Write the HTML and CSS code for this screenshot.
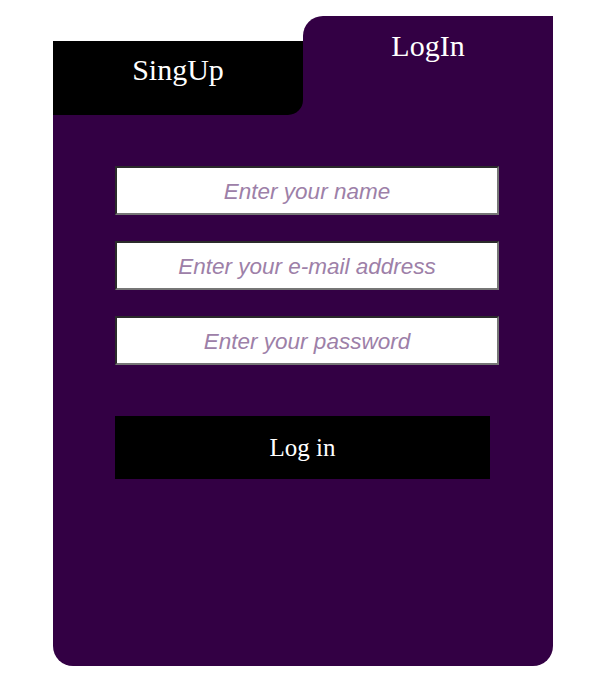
FILE: index.html
```html
<!DOCTYPE html>
<html>
<head>
<meta charset="utf-8">
<link rel="stylesheet" href="styles.css">
</head>
<body>
<div class="card">
  <div class="tabs">
    <div class="tab-left-wrap">
      <div class="tab tab-signup">SingUp</div>
    </div>
    <div class="tab tab-login">LogIn</div>
  </div>
  <form class="panel">
    <input class="field" type="text" placeholder="Enter your name">
    <input class="field" type="email" placeholder="Enter your e-mail address">
    <input class="field" type="password" placeholder="Enter your password">
    <button class="submit" type="button">Log in</button>
  </form>
</div>
</body>
</html>
```

FILE: styles.css
```css
html, body {
  margin: 0;
  padding: 0;
  background: #ffffff;
}
body {
  padding: 16px 0 0 53px;
  font-family: "Liberation Serif", "Times New Roman", serif;
}
.card {
  width: 500px;
}
.tabs {
  display: grid;
  grid-template-columns: 250px 250px;
}
.tab-left-wrap {
  margin-top: 25px;
  background: #330044;
}
.tab {
  color: #ffffff;
  font-size: 30px;
  line-height: 34px;
  text-align: center;
  box-sizing: border-box;
}
.tab-signup {
  height: 74px;
  padding-top: 12px;
  background: #000000;
  border-bottom-right-radius: 15px;
}
.tab-login {
  height: 99px;
  padding-top: 13px;
  background: #330044;
  border-top-left-radius: 20px;
}
.panel {
  margin: 0;
  background: #330044;
  height: 551px;
  box-sizing: border-box;
  padding: 51px 0 0 62px;
  border-radius: 0 0 20px 20px;
  display: flex;
  flex-direction: column;
  align-items: flex-start;
  gap: 26px;
}
.field {
  width: 384px;
  height: 49px;
  box-sizing: border-box;
  margin: 0;
  padding: 2px 4px 0;
  background: #ffffff;
  border-style: solid;
  border-width: 2px;
  border-color: #2b2b2b #767676 #767676 #2b2b2b;
  font-family: "Liberation Sans", Arial, sans-serif;
  font-size: 22.5px;
  font-style: italic;
  text-align: center;
  color: #333;
  outline: none;
}
.field::placeholder {
  color: #9d80a8;
  opacity: 1;
}
.submit {
  margin-top: 25px;
  width: 375px;
  height: 63px;
  background: #000000;
  border: none;
  color: #ffffff;
  font-family: "Liberation Serif", "Times New Roman", serif;
  font-size: 25px;
  padding: 0;
  cursor: pointer;
}
```
